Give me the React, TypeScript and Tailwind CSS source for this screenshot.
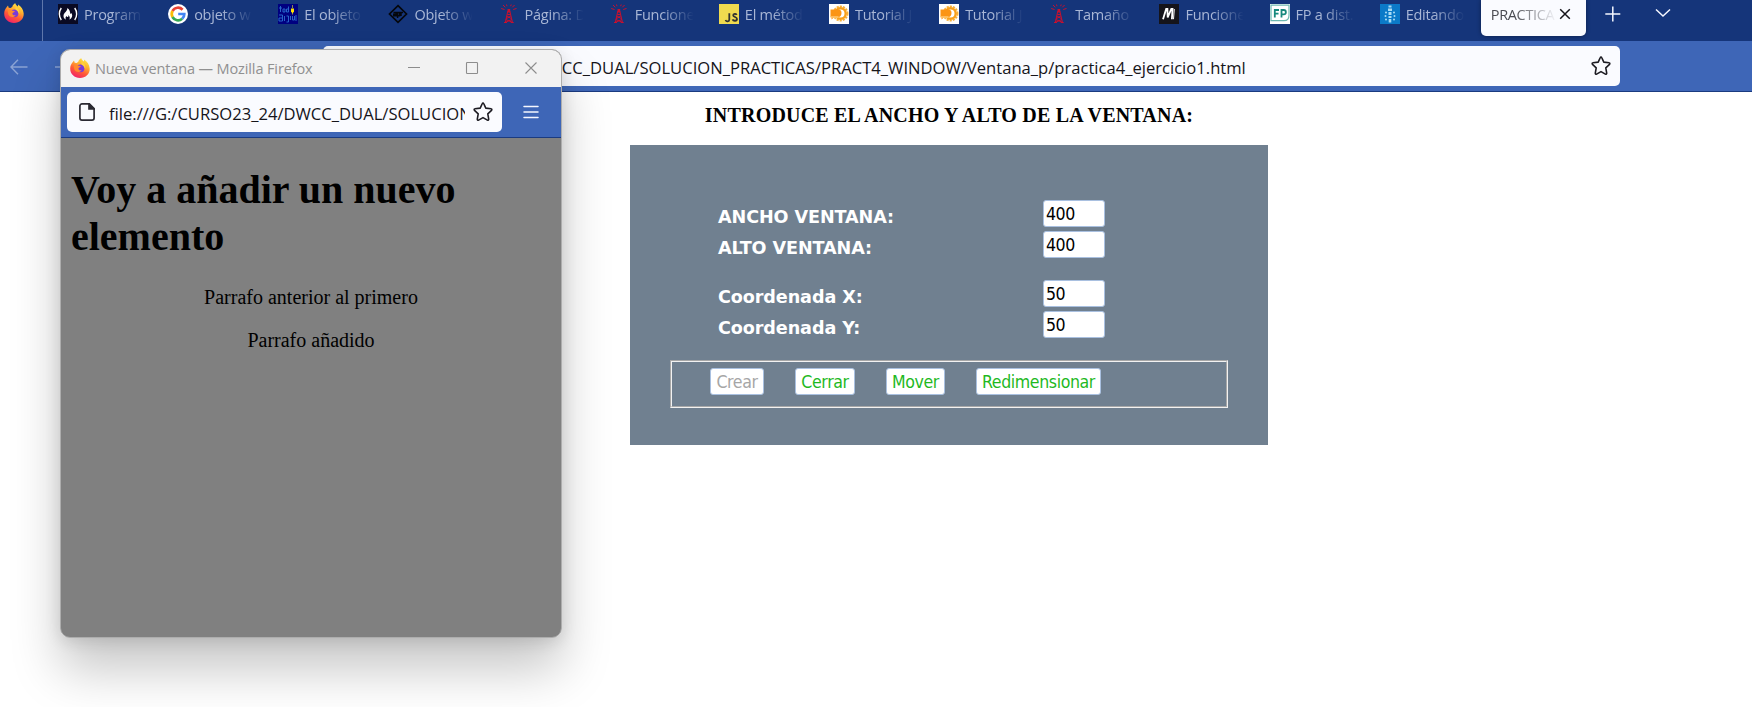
import React from "react";

const UI = "font-['Open_Sans','Noto_Sans',sans-serif]";
const FORM = "font-['DejaVu_Sans_Condensed','DejaVu_Sans',sans-serif] [font-stretch:condensed]";

function FirefoxIcon() {
  return (
    <svg viewBox="0 0 20 20" className="size-5 shrink-0">
      <defs>
        <linearGradient id="fx" x1="0.8" y1="0" x2="0.3" y2="1">
          <stop offset="0" stopColor="#fff04a" />
          <stop offset="0.35" stopColor="#ffb02e" />
          <stop offset="0.65" stopColor="#ff5a36" />
          <stop offset="1" stopColor="#f0206a" />
        </linearGradient>
      </defs>
      <path d="M2.6 4.2 4 2.6l.7 2.2 2 .2 1.6-1.3c.4-1.5 1.5-2.7 3-3.4.4 1.500 1.300 2.300 2.500 3.100.4-.6.4-1.200.2-1.900 3.300 1.900 5.400 5 5.700 9C20 16 15.500 20 10 20S.2 15.900.2 10.700C.2 8 1 6 2.600 4.200z" fill="url(#fx)" />
      <circle cx="10.500" cy="10.300" r="3.900" fill="#7a3ad8" />
      <path d="M3.800 7.600c1.700-1.300 3.700-1 4.800.1l2.200.3c-.2 1.200-1.300 1.500-2.300 1.900-.4 1.700 1 2.900 3.200 2.300-1.600 2.600-6.200 2.500-7.400-.9z" fill="#ff8a2e" />
      <path d="M11.300 3.300c3 1.500 4.700 4.500 3.900 8.300-.6-2.300-1.900-4-3.600-5z" fill="#ffd23d" />
    </svg>
  );
}

function FccIcon() {
  return (
    <svg viewBox="0 0 20 20" className="size-5 shrink-0">
      <rect width="20" height="20" fill="#0a0a23" />
      <path d="M3.300 4C.7 7.500.7 12.500 3.300 16M16.700 4c2.600 3.500 2.600 8.500 0 12" stroke="#fff" strokeWidth="1.400" fill="none" />
      <path d="M9.300 4c.6 3-3.800 4.800-3.800 8 0 1.800 1 3 2.500 3.600-.9-1.500-.4-2.600.6-3.600.2 1 .7 1.200 1.300 1 .7-.3.500-1.200.2-2 1.600 1 2.200 3 1.200 4.600 3.300-1.600 3.500-4.600 2-6.600-.2.700-.6.900-1 .8C12 8 11.800 5.500 9.300 4z" fill="#fff" />
    </svg>
  );
}

function GoogleIcon() {
  return (
    <svg viewBox="0 0 20 20" className="size-5 shrink-0">
      <circle cx="10" cy="10" r="10" fill="#fff" />
      <g fill="none" strokeWidth="2.700">
        <path d="M14.600 5.700A6.300 6.300 0 0 0 4.500 7" stroke="#ea4335" />
        <path d="M4.500 7a6.300 6.300 0 0 0 0 6" stroke="#fbbc05" />
        <path d="M4.500 13a6.300 6.300 0 0 0 9.700 1.800" stroke="#34a853" />
        <path d="M14.200 14.800A6.300 6.300 0 0 0 16.300 10h-6.100" stroke="#4285f4" />
      </g>
    </svg>
  );
}

function ArgentinaIcon() {
  return (
    <svg viewBox="0 0 20 20" className="size-5 shrink-0">
      <rect width="20" height="20" fill="#000080" />
      <path d="M2.500 2v6M1 4h3M5 5h2v3H5zM10.500 2.500v5.500h-2V5h2M1 11h3.500v6H1v-3h3M6.500 12v5M8.500 12h2v6h-2M12.500 12v4M14.500 12v4h2v-4M18 11v6" stroke="#2b6fd0" strokeWidth="0.900" fill="none" />
      <path d="M14.500 1v3M14.500 8v2.500" stroke="#8a8a50" strokeWidth="1" />
      <path d="M13 4.500h3v3l-1.500 2-1.500-2z" fill="#ffe000" />
    </svg>
  );
}

function AprIcon() {
  return (
    <svg viewBox="0 0 20 20" className="size-5 shrink-0">
      <path d="M10 1.700 18.500 10 10 18.300 1.500 10z" fill="none" stroke="#05070c" strokeWidth="1.700" />
      <path d="M5.500 8.500h2.700v3.300H5.800v-1.600h2M9.600 14V8.500h2v3.200h-2M13 12V8.500h2" stroke="#05070c" strokeWidth="1.500" fill="none" />
    </svg>
  );
}

function TowerIcon() {
  return (
    <svg viewBox="0 0 20 20" className="size-5 shrink-0">
      <g stroke="#c8102e" fill="none" strokeWidth="1">
        <path d="M8.800 7 6.300 18.500M10.800 7l2.700 11.500M8.300 10.500h3.200M7.900 12l4.600 2.700M11.800 12l-4.600 2.700M6.700 15.500l6.400 2.700M13 15.500l-6.400 2.700" />
        <path d="M6.300 3.300 4 1M5.500 5.500 2.200 4.500M13.300 3.300 15.600 1M14.200 5.500l3.300-1M8 2.200 7.500.5M11.700 2.200l.5-1.700" />
        <path d="M5 18.500h3M11.700 18.500h3" strokeWidth="1.200" />
      </g>
      <path d="M8.500 5h2.700v3.500H8.500z" fill="#c8102e" />
    </svg>
  );
}

function JsIcon() {
  return (
    <svg viewBox="0 0 20 20" className="size-5 shrink-0">
      <rect width="20" height="20" fill="#f0db4f" />
      <path d="M10.300 9.300v6.200c0 2.400-2.900 2.500-3.800.5M17.700 10.900c-.8-1.400-3.500-1.300-3.500.4 0 2.100 3.800 1.300 3.800 3.700 0 2.200-3.600 2.300-4.500.4" stroke="#323330" strokeWidth="1.800" fill="none" />
    </svg>
  );
}

function TutorialIcon() {
  return (
    <svg viewBox="0 0 20 20" className="size-5 shrink-0">
      <rect width="20" height="20" fill="#fff" />
      <circle cx="11.500" cy="9.500" r="7" fill="none" stroke="#f9b13a" strokeWidth="2" strokeDasharray="2.200 1" />
      <circle cx="11.500" cy="9.500" r="5.200" fill="none" stroke="#f9a01b" strokeWidth="2.400" />
      <path d="M1.500 5.500h8c2 0 3 1.500 3 3.500s-1 4-3 4h-4l-3 2.500V13h-1z" fill="#fb9414" />
      <path d="M1.500 13h8" stroke="#ffc46b" strokeWidth="1.600" />
    </svg>
  );
}

function MdnIcon() {
  return (
    <svg viewBox="0 0 20 20" className="size-5 shrink-0">
      <rect width="20" height="20" fill="#15141a" />
      <path d="M4 15.200 7.200 5h1.200l.3 8.500L12.300 5h1.200l-.6 10.200" stroke="#fff" strokeWidth="1.800" fill="none" />
      <path d="M15.300 5l-.8 10.200" stroke="#fff" strokeWidth="1" />
    </svg>
  );
}

function FpIcon() {
  return (
    <svg viewBox="0 0 20 20" className="size-5 shrink-0">
      <rect width="20" height="20" fill="#fff" />
      <path d="M1 1.200h18v10c0 3.500-2 5.500-5 5.500H1z" fill="none" stroke="#6fb9b1" strokeWidth="1.200" />
      <path d="M4.800 13.500V6h4.200M4.800 9.700h3.700M11.500 13.500V6h2.200c2.900 0 2.900 4.300 0 4.300h-2.200" fill="none" stroke="#17897d" strokeWidth="1.800" />
    </svg>
  );
}

function CastleIcon() {
  return (
    <svg viewBox="0 0 20 20" className="size-5 shrink-0">
      <rect width="20" height="20" fill="#0b7ac8" />
      <g fill="#a9dcf5">
        <path d="M8.500 1.500h3v2h-3zM8 4.500h4V7H8zM8.500 8h3v3h-3zM8.500 12h3v2h-3zM8.700 15h2.600v3.500H8.700z" />
        <circle cx="6" cy="8.500" r="1" /><circle cx="14" cy="8.500" r="1" />
        <circle cx="5.500" cy="12" r="1" /><circle cx="14.500" cy="12" r="1" />
        <circle cx="6" cy="15.500" r="1" /><circle cx="14" cy="15.500" r="1" />
      </g>
    </svg>
  );
}

function StarIcon() {
  return (
    <svg viewBox="0 0 20 20" className="size-5 shrink-0" fill="none" stroke="#1c1b22" strokeWidth="1.600" strokeLinejoin="round">
      <path d="M9.300 1.500c.3-.7 1.100-.7 1.400 0l2.100 4.600 5.200.7c.9.100 1.100.9.500 1.500l-3.700 3.500.9 5.400c.1.900-.6 1.300-1.300.9L10 15.600l-4.400 2.500c-.7.400-1.400-.1-1.300-.9l.9-5.400L1.500 8.300C.9 7.700 1.100 6.900 2 6.800l5.200-.7z" />
    </svg>
  );
}

const tabs = [
  { icon: <FccIcon />, title: "Program" },
  { icon: <GoogleIcon />, title: "objeto w" },
  { icon: <ArgentinaIcon />, title: "El objeto" },
  { icon: <AprIcon />, title: "Objeto w" },
  { icon: <TowerIcon />, title: "Página: D" },
  { icon: <TowerIcon />, title: "Funcione" },
  { icon: <JsIcon />, title: "El métod" },
  { icon: <TutorialIcon />, title: "Tutorial J" },
  { icon: <TutorialIcon />, title: "Tutorial J" },
  { icon: <TowerIcon />, title: "Tamaño -" },
  { icon: <MdnIcon />, title: "Funcione" },
  { icon: <FpIcon />, title: "FP a dist." },
  { icon: <CastleIcon />, title: "Editando" },
];

function TabStrip() {
  return (
    <div className="flex h-[41px] bg-[#15357a]">
      <div className="flex w-[43px] shrink-0 border-r border-[#5f77ab] pt-[3px] pl-1">
        <FirefoxIcon />
      </div>
      <div className="flex pt-1 pl-[15px]">
        {tabs.map((tab, i) => (
          <div key={i} className="flex w-[110.150px] shrink-0 gap-[6px]">
            {tab.icon}
            <span className={`${UI} w-[60px] overflow-hidden pt-px text-[14.500px] leading-5 tracking-[-0.250px] whitespace-nowrap text-[#a9b7d6] [mask-image:linear-gradient(to_right,#000_45%,transparent_98%)]`}>
              {tab.title}
            </span>
          </div>
        ))}
      </div>
      <div className="-ml-[9px] flex h-9 w-[105px] shrink-0 rounded-b-[5px] bg-[#fafbff] pt-1 pl-[10px] shadow-[0_0_4px_rgba(0,0,0,0.4)]">
        <span className={`${UI} w-[66px] overflow-hidden pt-px text-[14.500px] leading-5 tracking-[-0.350px] whitespace-nowrap text-[#4a4b52] [mask-image:linear-gradient(to_right,#000_35%,transparent_100%)]`}>
          PRACTICA
        </span>
        <svg viewBox="0 0 12 12" className="mt-1 ml-[2px] size-3" stroke="#15141a" strokeWidth="1.500">
          <path d="M1.200 1.200l9.600 9.600M10.800 1.200l-9.600 9.600" />
        </svg>
      </div>
      <svg viewBox="0 0 16 16" className="mt-[6px] ml-[19px] size-4" stroke="#f5f7ff" strokeWidth="1.500">
        <path d="M7.800 .5v15M.3 8h15" />
      </svg>
      <svg viewBox="0 0 16 10" className="mt-2 ml-[34px] h-[10px] w-4" fill="none" stroke="#f5f7ff" strokeWidth="1.500">
        <path d="M1 1.500l7 6.500 7-6.500" />
      </svg>
    </div>
  );
}

function MainToolbar() {
  return (
    <div className="flex h-[51px] border-b border-[#1b3b80] bg-[#3e66b7] pt-[5px]">
      <svg viewBox="0 0 18 16" className="mt-[13px] ml-[10px] h-4 w-[18px]" fill="none" stroke="#8ba3d4" strokeWidth="1.400">
        <path d="M17.500 8H1M8 .8 1 8l7 7.200" />
      </svg>
      <svg viewBox="0 0 18 16" className="mt-[13px] ml-[27px] h-4 w-[18px]" fill="none" stroke="#8ba3d4" strokeWidth="1.400">
        <path d="M0 8h17M10 .8 17 8l-7 7.200" />
      </svg>
      <div className="ml-[250px] flex h-10 w-[1297px] items-center rounded-[5px] bg-[#fafbff] pr-[9px] pl-[37px]">
        <span className={`${UI} flex-1 pt-[3px] text-[16.600px] leading-6 whitespace-nowrap text-[#15141a]`}>
          file:///G:/CURSO23_24/DWCC_DUAL/SOLUCION_PRACTICAS/PRACT4_WINDOW/Ventana_p/practica4_ejercicio1.html
        </span>
        <StarIcon />
      </div>
    </div>
  );
}

function Field({ label, value, className }: { label: string; value: string; className?: string }) {
  return (
    <label className={`flex h-[27px] ${className ?? ""}`}>
      <span className="w-[325px] pt-[5px] font-['DejaVu_Sans',sans-serif] text-[17.600px] leading-6 font-bold tracking-[-0.100px] whitespace-nowrap text-white">{label}</span>
      <input
        defaultValue={value}
        className={`${FORM} h-[27px] w-[62px] rounded-[3px] border border-[#a9c0e0] bg-white px-[2px] text-[17.600px] tracking-[-0.500px] text-black`}
      />
    </label>
  );
}

function ActionButton({ children, className }: { children: React.ReactNode; className: string }) {
  return (
    <button className={`${FORM} h-[27px] rounded-[3px] border border-[#a9c0e0] bg-white text-center text-[17.600px] leading-6 tracking-[-0.400px] whitespace-nowrap ${className}`}>
      {children}
    </button>
  );
}

function Page() {
  return (
    <main className="flex flex-1 flex-col bg-white pl-[630px]">
      <h3 className="mt-[11px] h-[42px] w-[638px] text-center font-['Liberation_Serif',serif] text-[20px] leading-6 font-bold tracking-[0.190px] whitespace-nowrap text-black">
        INTRODUCE EL ANCHO Y ALTO DE LA VENTANA:
      </h3>
      <form className="h-[300px] w-[638px] bg-[#708090] pt-[55px] pl-10">
        <div className="flex flex-col gap-1 pl-12">
          <Field label="ANCHO VENTANA:" value="400" />
          <Field label="ALTO VENTANA:" value="400" />
          <Field label="Coordenada X:" value="50" className="mt-[18px]" />
          <Field label="Coordenada Y:" value="50" />
        </div>
        <div className="mt-[22px] w-[558px] border border-t-[#a8a8a8] border-r-[#f2f2f2] border-b-[#f2f2f2] border-l-[#a8a8a8]">
          <div className="flex h-[46px] border border-t-[#f2f2f2] border-r-[#a8a8a8] border-b-[#a8a8a8] border-l-[#f2f2f2] pt-[6px] pl-[38px]">
            <ActionButton className="w-[54px] text-[#a6a6a6]">Crear</ActionButton>
            <ActionButton className="ml-[31px] w-[60px] text-[#1fb91f]">Cerrar</ActionButton>
            <ActionButton className="ml-[31px] w-[59px] text-[#1fb91f]">Mover</ActionButton>
            <ActionButton className="ml-[31px] w-[125px] text-[#1fb91f]">Redimensionar</ActionButton>
          </div>
        </div>
      </form>
    </main>
  );
}

function PopupWindow() {
  return (
    <section className="absolute top-[49px] left-[60px] flex h-[589px] w-[502px] flex-col overflow-hidden rounded-[10px] border border-[#adadad] bg-[#808080]">
      <header className="flex h-[37px] shrink-0 bg-[#f2f2f2] pl-[9px]">
        <div className="mt-2 flex">
          <FirefoxIcon />
        </div>
        <span className={`${UI} mt-[7px] ml-[5px] w-[313px] text-[14.500px] leading-6 tracking-[-0.120px] whitespace-nowrap text-[#909090]`}>
          Nueva ventana — Mozilla Firefox
        </span>
        <svg viewBox="0 0 130 12" className="mt-3 h-3 w-[130px]" fill="none" stroke="#8d8d8d" strokeWidth="1.100">
          <path d="M0 5.500h12M117.500.5l11 11M128.500.5l-11 11" />
          <rect x="58.500" y=".5" width="11" height="11" rx=".8" />
        </svg>
      </header>
      <div className="flex h-[51px] shrink-0 border-b border-[#1b3b80] bg-[#3e66b7] pt-[5px] pl-[6px]">
        <div className="flex h-10 w-[435px] items-center rounded-[5px] bg-[#fafbff] pl-3">
          <svg viewBox="0 0 16 18" className="h-[18px] w-4 shrink-0" fill="none" stroke="#2b2a33" strokeWidth="1.700">
            <path d="M3 .9h7.300l4.800 4.800V15a2.100 2.100 0 0 1-2.100 2.100H3A2.100 2.100 0 0 1 .9 15V3A2.100 2.100 0 0 1 3 .9z" />
            <path d="M10 .9V6h5z" fill="#2b2a33" />
          </svg>
          <span className={`${UI} ml-[14px] w-[356px] shrink-0 overflow-hidden pt-[3px] text-[16.600px] leading-6 whitespace-nowrap text-[#15141a]`}>
            file:///G:/CURSO23_24/DWCC_DUAL/SOLUCION
          </span>
          <div className="ml-2">
            <StarIcon />
          </div>
        </div>
        <svg viewBox="0 0 16 14" className="mt-[13px] ml-[21px] h-[14px] w-4" stroke="#f5f7ff" strokeWidth="1.500" strokeLinecap="round">
          <path d="M1 1.500h14M1 7h14M1 12.500h14" />
        </svg>
      </div>
      <div className="px-[10px] font-['Liberation_Serif',serif] text-black">
        <h1 className="mt-7 text-[40px] leading-[47px] font-bold">Voy a añadir un nuevo elemento</h1>
        <p className="mt-[26px] text-center text-[20px] leading-[23px]">Parrafo anterior al primero</p>
        <p className="mt-5 text-center text-[20px] leading-[23px]">Parrafo añadido</p>
      </div>
    </section>
  );
}

export default function App() {
  return (
    <div className="relative flex h-[707px] w-[1752px] flex-col overflow-hidden bg-white">
      <TabStrip />
      <MainToolbar />
      <Page />
      <div className="absolute top-[49px] left-[60px] h-[589px] w-[502px] rounded-[10px] shadow-[0_32px_50px_rgba(0,0,0,0.22),0_3px_16px_rgba(0,0,0,0.12)]" />
      <PopupWindow />
    </div>
  );
}
